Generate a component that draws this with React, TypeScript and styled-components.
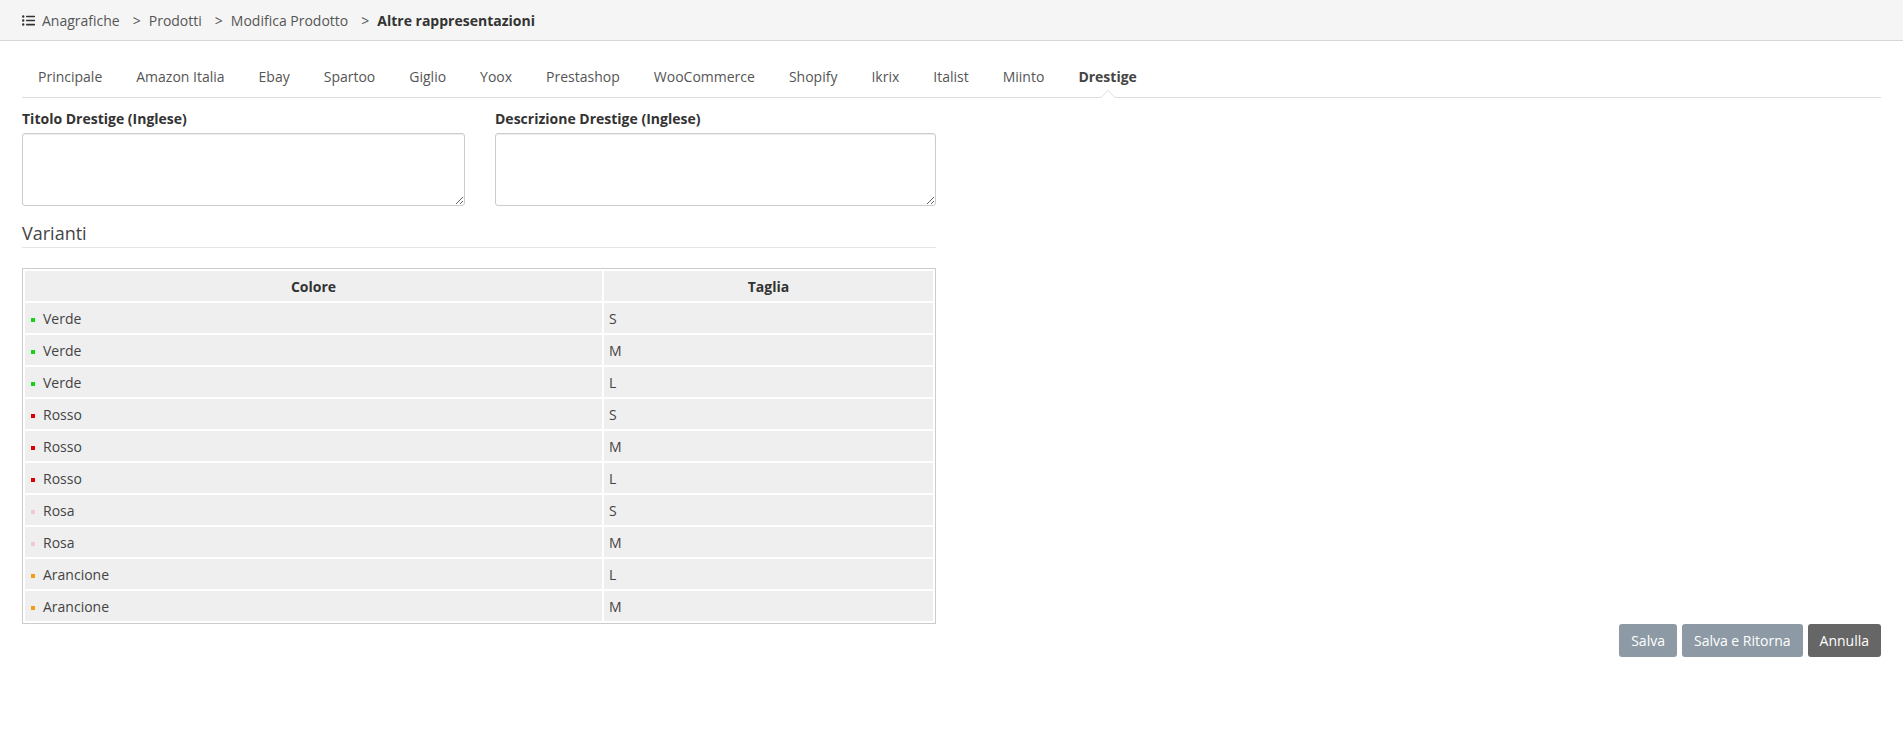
import React from "react";
import styled, { createGlobalStyle } from "styled-components";
import { FaListUl } from "react-icons/fa";

const tabs = [
  "Principale",
  "Amazon Italia",
  "Ebay",
  "Spartoo",
  "Giglio",
  "Yoox",
  "Prestashop",
  "WooCommerce",
  "Shopify",
  "Ikrix",
  "Italist",
  "Miinto",
  "Drestige",
];

const briciole = ["Anagrafiche", "Prodotti", "Modifica Prodotto", "Altre rappresentazioni"];

const colori: Record<string, string> = {
  Verde: "#17d117",
  Rosso: "#d90000",
  Rosa: "#f2c6d2",
  Arancione: "#f39c12",
};

const varianti = [
  ["Verde", "S"],
  ["Verde", "M"],
  ["Verde", "L"],
  ["Rosso", "S"],
  ["Rosso", "M"],
  ["Rosso", "L"],
  ["Rosa", "S"],
  ["Rosa", "M"],
  ["Arancione", "L"],
  ["Arancione", "M"],
];

const App = () => {
  return (
    <>
      <Global />
      <Header>
        <ListIcon />
        {briciole.map((b, i) => (
          <React.Fragment key={b}>
            {i > 0 && <Sep>&gt;</Sep>}
            <Crumb active={i === briciole.length - 1}>{b}</Crumb>
          </React.Fragment>
        ))}
      </Header>
      <Page>
        <Tabs>
          {tabs.map((t) => (
            <Tab key={t} active={t === "Drestige"}>
              {t}
            </Tab>
          ))}
        </Tabs>
        <Form>
          <Fields>
            <Field>
              <Label>Titolo Drestige (Inglese)</Label>
              <TextArea />
            </Field>
            <Field>
              <Label>Descrizione Drestige (Inglese)</Label>
              <TextArea />
            </Field>
          </Fields>
          <Legend>Varianti</Legend>
          <Table>
            <thead>
              <tr>
                <Th wide>Colore</Th>
                <Th>Taglia</Th>
              </tr>
            </thead>
            <tbody>
              {varianti.map(([c, t], i) => (
                <tr key={i}>
                  <Td first>
                    <Dot color={colori[c]} />
                    {c}
                  </Td>
                  <Td>{t}</Td>
                </tr>
              ))}
            </tbody>
          </Table>
        </Form>
        <Buttons>
          <Button>Salva</Button>
          <Button>Salva e Ritorna</Button>
          <Button dark>Annulla</Button>
        </Buttons>
      </Page>
    </>
  );
};

export default App;

const Global = createGlobalStyle`
body {
  margin: 0;
  background: #fff;
  font-family: "Open Sans", "Liberation Sans", sans-serif;
  font-size: 14px;
  color: #333;
}
`;

const Header = styled.div`
height: 40px;
background-color: #f5f5f5;
border-bottom: 1px solid #d6d6d6;
display: flex;
align-items: center;
padding: 0 22px;
color: #555;
`;

const ListIcon = styled(FaListUl)`
width: 13px;
height: 13px;
color: #333;
margin-right: 7px;
`;

const Crumb = styled.span<{ active?: boolean }>`
font-weight: ${(p) => (p.active ? 700 : 400)};
color: ${(p) => (p.active ? "#333" : "#555")};
`;

const Sep = styled.span`
margin: 0 8px 0 13px;
color: #555;
`;

const Page = styled.div`
padding: 0 22px;
`;

const Tabs = styled.div`
margin-top: 16px;
display: flex;
border-bottom: 1px solid #ddd;
`;

const Tab = styled.div<{ active?: boolean }>`
position: relative;
height: 40px;
line-height: 40px;
padding: 0 16px;
margin-right: 2px;
color: ${(p) => (p.active ? "#444" : "#555")};
font-weight: ${(p) => (p.active ? 700 : 400)};

${(p) =>
  p.active &&
  `
  &::before {
    content: "";
    position: absolute;
    left: 50%;
    bottom: -1px;
    margin-left: -8px;
    border: 8px solid transparent;
    border-bottom: 8px solid #ddd;
    border-top: 0;
  }
  &::after {
    content: "";
    position: absolute;
    left: 50%;
    bottom: -1px;
    margin-left: -7px;
    border: 7px solid transparent;
    border-bottom: 7px solid #fff;
    border-top: 0;
  }
`}
`;

const Form = styled.div`
width: 914px;
`;

const Fields = styled.div`
display: grid;
grid-template-columns: 443px 441px;
column-gap: 30px;
margin-top: 12px;
`;

const Field = styled.div`
display: flex;
flex-direction: column;
`;

const Label = styled.label`
font-weight: 700;
line-height: 18px;
margin-bottom: 5px;
color: #333;
`;

const TextArea = styled.textarea`
box-sizing: border-box;
height: 73px;
border: 1px solid #ccc;
border-radius: 3px;
box-shadow: inset 0 1px 1px rgba(0, 0, 0, 0.075);
font-family: inherit;
margin: 0;
`;

const Legend = styled.div`
margin-top: 14px;
font-size: 18px;
font-weight: 400;
line-height: 26px;
padding-bottom: 1px;
border-bottom: 1px solid #e5e5e5;
color: #444;
`;

const Table = styled.table`
margin-top: 20px;
width: 100%;
table-layout: fixed;
border: 1px solid #ccc;
border-spacing: 2px;
`;

const Th = styled.th<{ wide?: boolean }>`
height: 30px;
padding: 0 5px;
background-color: #efefef;
font-weight: 700;
text-align: center;
color: #333;
${(p) => p.wide && "width: 567px;"}
`;

const Td = styled.td<{ first?: boolean }>`
height: 30px;
padding: 0 ${(p) => (p.first ? "6px" : "5px")};
background-color: #efefef;
color: #444;
`;

const Dot = styled.span<{ color: string }>`
display: inline-block;
width: 4px;
height: 4px;
background-color: ${(p) => p.color};
margin-right: 8px;
vertical-align: middle;
`;

const Buttons = styled.div`
display: flex;
justify-content: flex-end;
gap: 5px;
`;

const Button = styled.button<{ dark?: boolean }>`
height: 33px;
padding: 0 12px;
border: 0;
border-radius: 3px;
background-color: ${(p) => (p.dark ? "#666" : "#8d9aa5")};
color: #fff;
font-family: inherit;
font-size: 14px;
`;
